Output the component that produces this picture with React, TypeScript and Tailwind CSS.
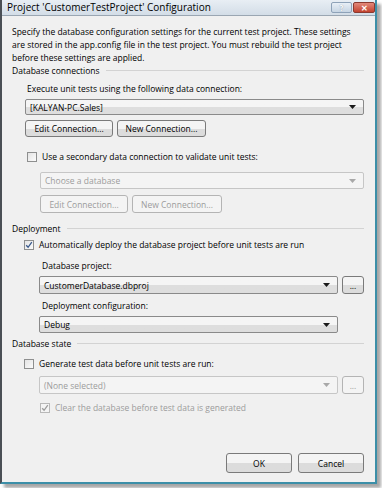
import React from "react";

const FONT = "font-['Segoe_UI','Open_Sans','Liberation_Sans',sans-serif]";

function Arrow({ disabled }: { disabled?: boolean }) {
  return (
    <svg width="7" height="4" viewBox="0 0 7 4" className="shrink-0">
      <path d="M0 0h7L3.5 4z" fill={disabled ? "#a8a8a8" : "#1a1a1a"} />
    </svg>
  );
}

function Combo({
  text,
  disabled,
  className = "",
}: {
  text: string;
  disabled?: boolean;
  className?: string;
}) {
  return (
    <div
      className={
        "flex items-center justify-between rounded-[2px] border pl-[4px] pr-[7px] " +
        (disabled
          ? "border-[#c6c6c6] bg-[#f4f4f4] text-[#9c9c9c] "
          : "border-[#8a8a8a] bg-gradient-to-b from-[#f5f5f5] from-50% to-[#dedede] to-50% text-black ") +
        className
      }
    >
      <span>{text}</span>
      <Arrow disabled={disabled} />
    </div>
  );
}

function Btn({
  children,
  disabled,
  className = "",
}: {
  children: React.ReactNode;
  disabled?: boolean;
  className?: string;
}) {
  return (
    <div
      className={
        "flex items-center justify-center rounded-[3px] border " +
        (disabled
          ? "border-[#b4b4b4] bg-[#f4f4f4] text-[#9c9c9c] "
          : "border-[#7a7a7a] bg-gradient-to-b from-[#f4f4f4] from-50% to-[#dcdcdc] to-50% text-black ") +
        className
      }
    >
      {children}
    </div>
  );
}

function Check({
  checked,
  disabled,
}: {
  checked?: boolean;
  disabled?: boolean;
}) {
  return (
    <div
      className={
        "flex h-[10px] w-[10px] shrink-0 items-center justify-center border " +
        (disabled
          ? "border-[#b8b8b8] bg-[#f4f4f4]"
          : "border-[#8e8f8f] bg-gradient-to-br from-[#e4e4e4] to-[#fbfbfb]")
      }
    >
      {checked && (
        <svg width="8" height="8" viewBox="0 0 8 8">
          <path
            d="M1.2 4.2 3.1 6.3 6.8 1.2"
            fill="none"
            stroke={disabled ? "#9c9c9c" : "#3a5a8c"}
            strokeWidth="1.3"
          />
        </svg>
      )}
    </div>
  );
}

function GroupHeader({ label }: { label: string }) {
  return (
    <div className="flex h-[13px] items-center gap-[6px]">
      <span>{label}</span>
      <div className="h-px flex-1 bg-[#d3d3d3]" />
    </div>
  );
}

export default function App() {
  return (
    <div className={"h-[488px] w-[382px] bg-white text-[8.5px] leading-[13px] text-black " + FONT}>
      <div className="flex h-[484px] w-[377px] flex-col border-l-2 border-r-2 border-b-2 border-l-[#4a4f55] border-r-[#3c8fa8] border-b-[#3c8fa8] shadow-[4px_4px_3px_rgba(0,0,0,0.35)]">
        {/* title bar */}
        <div className="flex h-[16px] items-center justify-between border-b border-[#9aa6b2] bg-gradient-to-b from-[#e8eef4] to-[#d3dde7] pl-[5px]">
          <span className="text-[10px]">Project 'CustomerTestProject' Configuration</span>
          <div className="flex items-start gap-[1px] self-start pt-[2px]">
            <div className="flex h-[11px] w-[21px] items-center justify-center rounded-[2px] border border-[#8ea2b8] bg-gradient-to-b from-[#e8eff6] to-[#c7d5e3] text-[8px] font-bold leading-none text-white [text-shadow:0_0_1px_#6a7f96]">
              ?
            </div>
            <div className="flex h-[11px] w-[22px] items-center justify-center rounded-[2px] border border-[#8a3a30] bg-gradient-to-b from-[#e2887a] to-[#c2412e] text-[8px] font-bold leading-none text-white">
              ✕
            </div>
          </div>
        </div>

        {/* body */}
        <div className="flex flex-1 flex-col bg-[#f0f0f0] pl-[10px] pr-[11px]">
          <p className="mt-[9px] pr-[10px]">
            Specify the database configuration settings for the current test project. These settings
            are stored in the app.config file in the test project. You must rebuild the test project
            before these settings are applied.
          </p>

          <div>
            <GroupHeader label="Database connections" />
          </div>
          <div className="flex flex-col pl-[13px]">
            <div className="mt-[5px] pl-[2px]">Execute unit tests using the following data connection:</div>
            <Combo text="[KALYAN-PC.Sales]" className="mt-[4px] h-[16px]" />
            <div className="mt-[5px] flex gap-[4px]">
              <Btn className="h-[17px] w-[88px]">Edit Connection...</Btn>
              <Btn className="h-[17px] w-[89px]">New Connection...</Btn>
            </div>
            <div className="mt-[13px] flex items-center gap-[5px] pl-[2px]">
              <Check />
              <span>Use a secondary data connection to validate unit tests:</span>
            </div>
            <div className="flex flex-col pl-[15px]">
              <Combo disabled text="Choose a database" className="mt-[9px] h-[17px]" />
              <div className="mt-[6px] flex gap-[4px]">
                <Btn disabled className="h-[18px] w-[88px]">Edit Connection...</Btn>
                <Btn disabled className="h-[18px] w-[90px]">New Connection...</Btn>
              </div>
            </div>
          </div>

          <div className="mt-[9px]">
            <GroupHeader label="Deployment" />
          </div>
          <div className="flex flex-col pl-[12px]">
            <div className="mt-[3px] flex items-center gap-[5px]">
              <Check checked />
              <span>Automatically deploy the database project before unit tests are run</span>
            </div>
            <div className="flex flex-col pl-[15px]">
              <div className="mt-[8px] pl-[3px]">Database project:</div>
              <div className="mt-[4px] flex gap-[4px]">
                <Combo text="CustomerDatabase.dbproj" className="h-[18px] flex-1" />
                <Btn className="h-[18px] w-[22px] text-[#555]">...</Btn>
              </div>
              <div className="mt-[5px] pl-[3px]">Deployment configuration:</div>
              <div className="mt-[4px] pr-[26px]">
                <Combo text="Debug" className="h-[17px]" />
              </div>
            </div>
          </div>

          <div className="mt-[4px]">
            <GroupHeader label="Database state" />
          </div>
          <div className="flex flex-col pl-[12px]">
            <div className="mt-[7px] flex items-center gap-[5px]">
              <Check />
              <span>Generate test data before unit tests are run:</span>
            </div>
            <div className="flex flex-col pl-[15px]">
              <div className="mt-[6px] flex gap-[4px]">
                <Combo disabled text="(None selected)" className="h-[18px] flex-1" />
                <Btn disabled className="h-[18px] w-[22px]">...</Btn>
              </div>
              <div className="mt-[7px] flex items-center gap-[5px] pl-[1px] text-[#9c9c9c]">
                <Check checked disabled />
                <span>Clear the database before test data is generated</span>
              </div>
            </div>
          </div>

          <div className="mt-auto mb-[9px] flex justify-end gap-[6px]">
            <Btn className="h-[20px] w-[66px]">OK</Btn>
            <Btn className="h-[20px] w-[66px]">Cancel</Btn>
          </div>
        </div>
      </div>
    </div>
  );
}
